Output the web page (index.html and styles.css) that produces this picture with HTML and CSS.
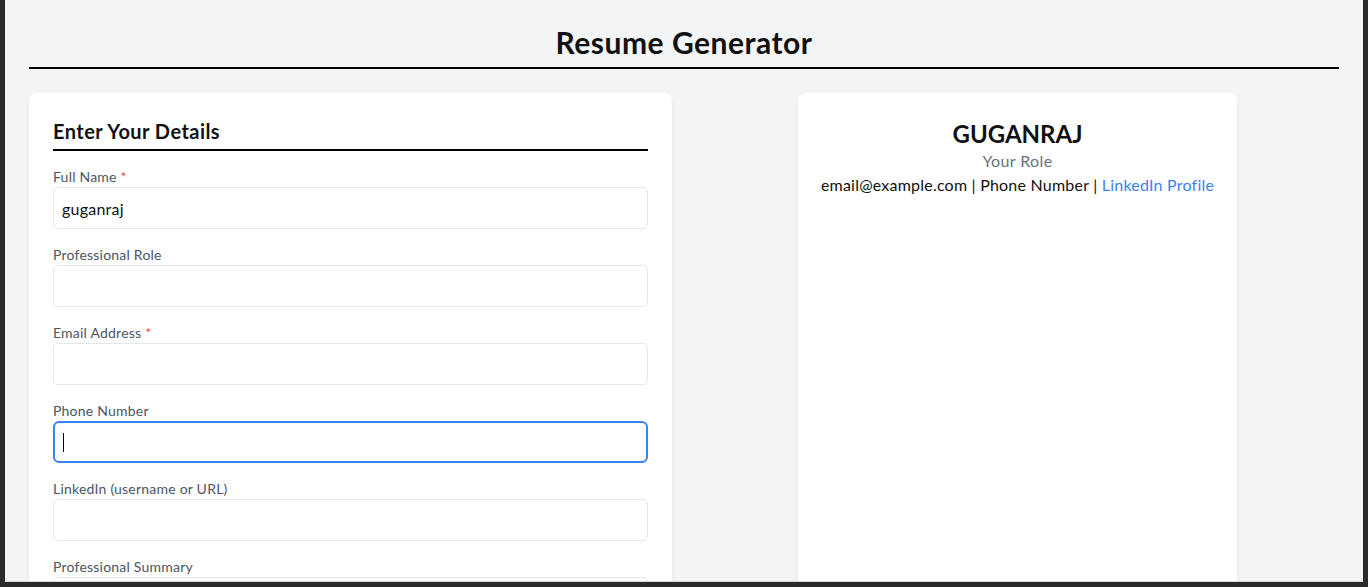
FILE: index.html
```html
<!DOCTYPE html>
<html lang="en">
<head>
<meta charset="utf-8">
<title>Resume Generator</title>
<link rel="stylesheet" href="styles.css">
</head>
<body>
<div class="window">
  <div class="app">
    <header class="app-header">
      <h1 class="app-title">Resume Generator</h1>
    </header>
    <main class="columns">
      <section class="card form-card">
        <h2 class="card-title">Enter Your Details</h2>
        <div class="field">
          <label class="label">Full Name <span class="req">*</span></label>
          <input class="input" type="text" value="guganraj">
        </div>
        <div class="field">
          <label class="label">Professional Role</label>
          <input class="input" type="text">
        </div>
        <div class="field">
          <label class="label">Email Address <span class="req">*</span></label>
          <input class="input" type="email">
        </div>
        <div class="field">
          <label class="label">Phone Number</label>
          <div class="input input-focused"><span class="caret"></span></div>
        </div>
        <div class="field">
          <label class="label">LinkedIn (username or URL)</label>
          <input class="input" type="text">
        </div>
        <div class="field">
          <label class="label">Professional Summary</label>
          <textarea class="input textarea"></textarea>
        </div>
      </section>
      <section class="card preview-card">
        <div class="preview-name">GUGANRAJ</div>
        <div class="preview-role">Your Role</div>
        <div class="preview-contact">email@example.com | Phone Number | <a class="link" href="#">LinkedIn Profile</a></div>
      </section>
    </main>
  </div>
</div>
</body>
</html>
```

FILE: styles.css
```css
* { box-sizing: border-box; }
html, body { margin: 0; padding: 0; background: #2b2b2b; }
body { font-family: Lato, "Noto Sans", sans-serif; color: #111; letter-spacing: 0.22px; }

.window {
  height: 582px;
  margin: 0 5px;
  overflow: hidden;
  background: #f3f4f6;
  border-bottom: 1px solid #d8d8d8;
}

.app { padding: 0 24px; }

.app-header {
  border-bottom: 2px solid #000;
  padding: 25px 0 8px;
}
.app-title {
  margin: 0;
  text-align: center;
  font-size: 30px;
  line-height: 34px;
  font-weight: 700;
  letter-spacing: 0.5px;
}

.columns {
  display: flex;
  align-items: flex-start;
  gap: 126px;
  margin-top: 24px;
}

.card {
  background: #fff;
  border-radius: 8px;
  box-shadow: 0 4px 6px -1px rgba(0,0,0,0.08), 0 2px 4px -2px rgba(0,0,0,0.06);
}

.form-card {
  width: 643px;
  padding: 24px;
  height: 520px;
}

.card-title {
  margin: 0 0 16px;
  font-size: 20px;
  line-height: 28px;
  font-weight: 700;
  letter-spacing: 0.45px;
  padding-bottom: 4px;
  border-bottom: 2px solid #000;
}

.field { margin-bottom: 16px; display: flex; flex-direction: column; }

.label {
  font-size: 14px;
  line-height: 20px;
  color: #4b5563;
}
.req { color: #ef4444; }

.input {
  display: block;
  width: 100%;
  height: 42px;
  border: 1px solid #e5e7eb;
  border-radius: 5px;
  padding: 0 8px;
  font-family: inherit;
  font-size: 16px;
  letter-spacing: 0.22px;
  color: #111;
  background: #fff;
  outline: none;
}
.textarea { height: 80px; resize: none; }

.input-focused {
  border: 2px solid #3b82f6;
  border-radius: 6px;
  padding: 0 8px;
  display: flex;
  align-items: center;
}
.caret {
  display: block;
  width: 1px;
  height: 19px;
  background: #000;
}

.preview-card {
  width: 439px;
  height: 520px;
  padding: 25px 12px 24px;
  text-align: center;
}
.preview-name {
  font-size: 24px;
  line-height: 32px;
  font-weight: 700;
  letter-spacing: 0;
}
.preview-role {
  font-size: 16px;
  line-height: 22px;
  color: #6b7280;
  letter-spacing: 0.4px;
}
.preview-contact {
  font-size: 16px;
  line-height: 26px;
  color: #111;
}
.link { color: #3b82f6; text-decoration: none; }
```
